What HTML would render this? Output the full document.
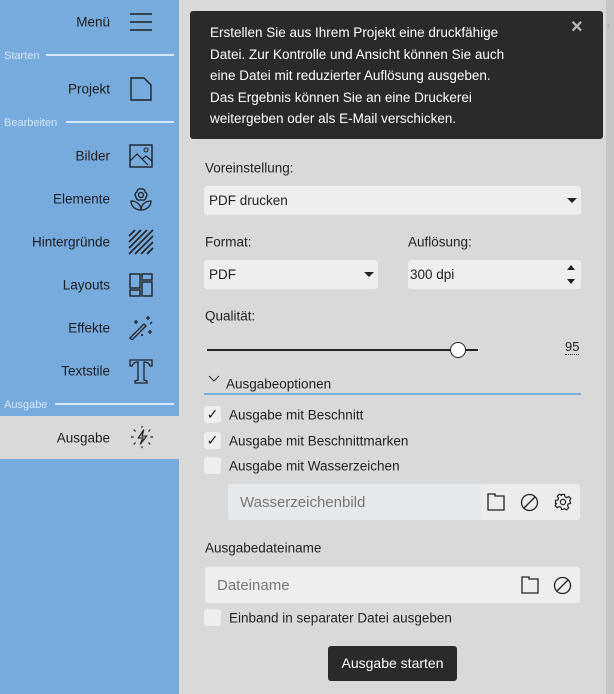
<!DOCTYPE html>
<html><head><meta charset="utf-8"><style>
*{margin:0;padding:0;box-sizing:border-box}
body{width:614px;height:694px;overflow:hidden;background:#d9d9d9;font-family:"Liberation Sans",sans-serif;font-size:13.5px;color:#222;position:relative}
.a{position:absolute}
#side{left:0;top:0;width:179px;height:694px;background:#77aadd}
.it{position:absolute;left:-10px;width:120px;text-align:right;font-size:13.5px;color:#1e1e1e;transform:translateY(-50%)}
.sec{position:absolute;left:4px;font-size:11px;color:#d6e8fa;transform:translateY(-50%)}
.secl{position:absolute;height:2px;background:#d6e8fa}
.ic{position:absolute;left:128px;width:26px;height:26px}
.lab{position:absolute;font-size:13.5px;color:#222;transform:translateY(-50%);white-space:nowrap}
.sel{position:absolute;background:#eeeeee;border-radius:3px;font-size:13.5px;padding-left:5px;display:flex;align-items:center}
.tri{position:absolute;width:0;height:0;border-left:5px solid transparent;border-right:5px solid transparent;border-top:5px solid #222}
.cb{position:absolute;left:204px;width:17px;height:17px;background:#eeeeee;border-radius:3px;font-size:14px;line-height:17px;text-align:center;color:#222}
</style></head><body>
<div id="side" class="a"></div>
<div class="a" style="left:0;top:416px;width:179px;height:43px;background:#d9d9d9"></div>
<div class="a" style="left:606px;top:0;width:8px;height:694px;background:#c6c6c6"></div>
<div class="a" style="left:607px;top:20px;font-size:9px;color:#999">‹</div>

<div class="it" style="top:22px">Menü</div>
<svg class="ic" style="top:9px" viewBox="0 0 26 26"><path d="M2 5H24M2 13H24M2 21H24" stroke="#222" stroke-width="1.5"/></svg>
<div class="sec" style="top:56px">Starten</div><div class="secl" style="left:46px;width:128px;top:54px"></div>
<div class="it" style="top:89px">Projekt</div>
<svg class="ic" style="top:76px" viewBox="0 0 26 26"><path d="M3 2H16L23 9V24H3Z" fill="none" stroke="#222" stroke-width="1.4"/></svg>
<div class="sec" style="top:123px">Bearbeiten</div><div class="secl" style="left:66px;width:108px;top:121px"></div>
<div class="it" style="top:156px">Bilder</div>
<svg class="ic" style="top:143px" viewBox="0 0 26 26"><rect x="2" y="2" width="22" height="22" fill="none" stroke="#222" stroke-width="1.4"/><path d="M2 18L9 11L20 22M14 16L18 13L24 18" fill="none" stroke="#222" stroke-width="1.2"/><circle cx="18" cy="7" r="2" fill="none" stroke="#222"/></svg>
<div class="it" style="top:199px">Elemente</div>
<svg class="ic" style="top:186px" viewBox="0 0 26 26" fill="none" stroke="#222" stroke-width="1.3"><circle cx="13" cy="9" r="2.5"/><path d="M13 3a3 3 0 0 1 4 3a3 3 0 0 1 1 5a3 3 0 0 1-4 3h-2a3 3 0 0 1-4-3a3 3 0 0 1 1-5a3 3 0 0 1 4-3z"/><path d="M3 15c5 0 10 3 10 9c-6 0-10-4-10-9zM23 15c-5 0-10 3-10 9c6 0 10-4 10-9z"/></svg>
<div class="it" style="top:242px">Hintergründe</div>
<svg class="ic" style="top:229px" viewBox="0 0 26 26" stroke="#222" stroke-width="1.6"><path d="M1 7L7 1M1 13L13 1M1 19L19 1M1 25L25 1M7 25L25 7M13 25L25 13M19 25L25 19"/></svg>
<div class="it" style="top:285px">Layouts</div>
<svg class="ic" style="top:272px" viewBox="0 0 26 26" fill="none" stroke="#222" stroke-width="1.4"><rect x="2" y="2" width="10" height="14"/><rect x="2" y="18" width="10" height="6"/><rect x="14" y="2" width="10" height="6"/><rect x="14" y="10" width="10" height="14"/></svg>
<div class="it" style="top:328px">Effekte</div>
<svg class="ic" style="top:314px" viewBox="0 0 26 26" fill="none" stroke="#222" stroke-width="1.3"><path d="M2 24L16 10L18 12L4 26Z"/><path d="M20 2V6M18 4H22M24 8L22 10M8 6V10M6 8H10M22 16V20M20 18H24M14 20V22M13 21H15"/></svg>
<div class="it" style="top:371px">Textstile</div>
<svg class="ic" style="top:358px" viewBox="0 0 26 26" fill="none" stroke="#222" stroke-width="1.3"><path d="M2 2H24V8H22C21 5 19 4 16 4V22L19 23V25H7V23L10 22V4C7 4 5 5 4 8H2Z"/></svg>
<div class="sec" style="top:405px">Ausgabe</div><div class="secl" style="left:55px;width:119px;top:403px"></div>
<div class="it" style="top:438px">Ausgabe</div>
<svg class="ic" style="top:425px;left:130px;width:24px;height:24px" viewBox="0 0 26 26" fill="none" stroke="#222" stroke-width="1.3"><path d="M15 5L9 14H14L11 21L18 12H13Z"/><path d="M13 1V3M13 23V25M4 5L6 7M22 5L20 7M1 13H4M22 13H25M4 21L6 19M22 21L20 19"/></svg>

<div class="a" style="left:190px;top:11px;width:413px;height:128px;background:#2a2a2a;border-radius:3px"></div>
<div class="a" style="left:210px;top:22px;width:370px;color:#fff;font-size:13.5px;line-height:21.5px;white-space:nowrap">Erstellen Sie aus Ihrem Projekt eine druckfähige<br>Datei. Zur Kontrolle und Ansicht können Sie auch<br>eine Datei mit reduzierter Auflösung ausgeben.<br>Das Ergebnis können Sie an eine Druckerei<br>weitergeben oder als E-Mail verschicken.</div>
<div class="a" style="left:571px;top:16px;color:#bbb;font-size:20px;font-weight:bold">×</div>

<div class="lab" style="left:205px;top:168px">Voreinstellung:</div>
<div class="sel" style="left:204px;top:186px;width:377px;height:29px">PDF drucken</div>
<div class="tri" style="left:567px;top:198px"></div>
<div class="lab" style="left:205px;top:242px">Format:</div>
<div class="sel" style="left:204px;top:260px;width:174px;height:29px">PDF</div>
<div class="tri" style="left:364px;top:272px"></div>
<div class="lab" style="left:408px;top:242px">Auflösung:</div>
<div class="sel" style="left:408px;top:260px;width:173px;height:29px;padding-left:2px">300 dpi</div>
<div class="tri" style="left:567px;top:265px;border-top:none;border-bottom:5px solid #222;border-left-width:4px;border-right-width:4px"></div>
<div class="tri" style="left:567px;top:279px;border-left-width:4px;border-right-width:4px"></div>

<div class="lab" style="left:205px;top:316px">Qualität:</div>
<div class="a" style="left:207px;top:349px;width:271px;height:2px;background:#222"></div>
<div class="a" style="left:450px;top:342px;width:16px;height:16px;border-radius:50%;background:#fff;border:1.5px solid #222"></div>
<div class="a" style="left:565px;top:339px;font-size:13px;border-bottom:1px dotted #222;line-height:15px">95</div>

<svg class="a" style="left:208px;top:375px" width="12" height="8"><path d="M1 1L6 6L11 1" fill="none" stroke="#333"/></svg>
<div class="lab" style="left:226px;top:384px">Ausgabeoptionen</div>
<div class="a" style="left:204px;top:393px;width:377px;height:2px;background:#77aadd"></div>

<div class="cb" style="top:406px">✓</div><div class="lab" style="left:229px;top:415px">Ausgabe mit Beschnitt</div>
<div class="cb" style="top:432px">✓</div><div class="lab" style="left:229px;top:441px">Ausgabe mit Beschnittmarken</div>
<div class="cb" style="top:457px"></div><div class="lab" style="left:229px;top:466px">Ausgabe mit Wasserzeichen</div>

<div class="a" style="left:228px;top:484px;width:352px;height:36px;background:#ececec;border-radius:3px"></div>
<div class="a" style="left:228px;top:484px;width:253px;height:36px;background:#e6e9ec;border-radius:3px 0 0 3px"></div>
<div class="a" style="left:240px;top:494px;font-size:15px;color:#777">Wasserzeichenbild</div>
<svg class="a" style="left:487px;top:493px" width="18" height="18" viewBox="0 0 18 18" fill="none" stroke="#222" stroke-width="1.3"><path d="M1 1H8V3H17V17H1Z"/></svg>
<svg class="a" style="left:520px;top:493px" width="19" height="19" viewBox="0 0 19 19" fill="none" stroke="#222" stroke-width="1.3"><circle cx="9.5" cy="9.5" r="8"/><path d="M4 15L15 4"/></svg>
<svg class="a" style="left:554px;top:493px" width="18" height="18" viewBox="0 0 24 24" fill="none" stroke="#222" stroke-width="1.6"><circle cx="12" cy="12" r="3.5"/><path d="M10 2h4l.6 3 2.4 1.2 2.7-1.6 2.8 2.8-1.6 2.7L22 12.5V14l-3 .6-1 2.4 1.6 2.7-2.8 2.8-2.7-1.6-2.4 1L11 22h-1l-.6-3-2.4-1-2.7 1.6-2.8-2.8 1.6-2.7L2 14v-4l3-.6 1-2.4L4.4 4.3 7.2 1.5l2.7 1.6z"/></svg>

<div class="lab" style="left:205px;top:548px">Ausgabedateiname</div>
<div class="a" style="left:205px;top:567px;width:375px;height:36px;background:#eeeeee;border-radius:3px"></div>
<div class="a" style="left:217px;top:577px;font-size:15px;color:#777">Dateiname</div>
<svg class="a" style="left:521px;top:576px" width="18" height="18" viewBox="0 0 18 18" fill="none" stroke="#222" stroke-width="1.3"><path d="M1 1H8V3H17V17H1Z"/></svg>
<svg class="a" style="left:553px;top:576px" width="19" height="19" viewBox="0 0 19 19" fill="none" stroke="#222" stroke-width="1.3"><circle cx="9.5" cy="9.5" r="8"/><path d="M4 15L15 4"/></svg>

<div class="cb" style="top:609px"></div><div class="lab" style="left:229px;top:618px">Einband in separater Datei ausgeben</div>
<div class="a" style="left:328px;top:646px;width:129px;height:35px;background:#2a2a2a;border-radius:3px;color:#fff;font-size:14px;text-align:center;line-height:35px">Ausgabe starten</div>
</body></html>
